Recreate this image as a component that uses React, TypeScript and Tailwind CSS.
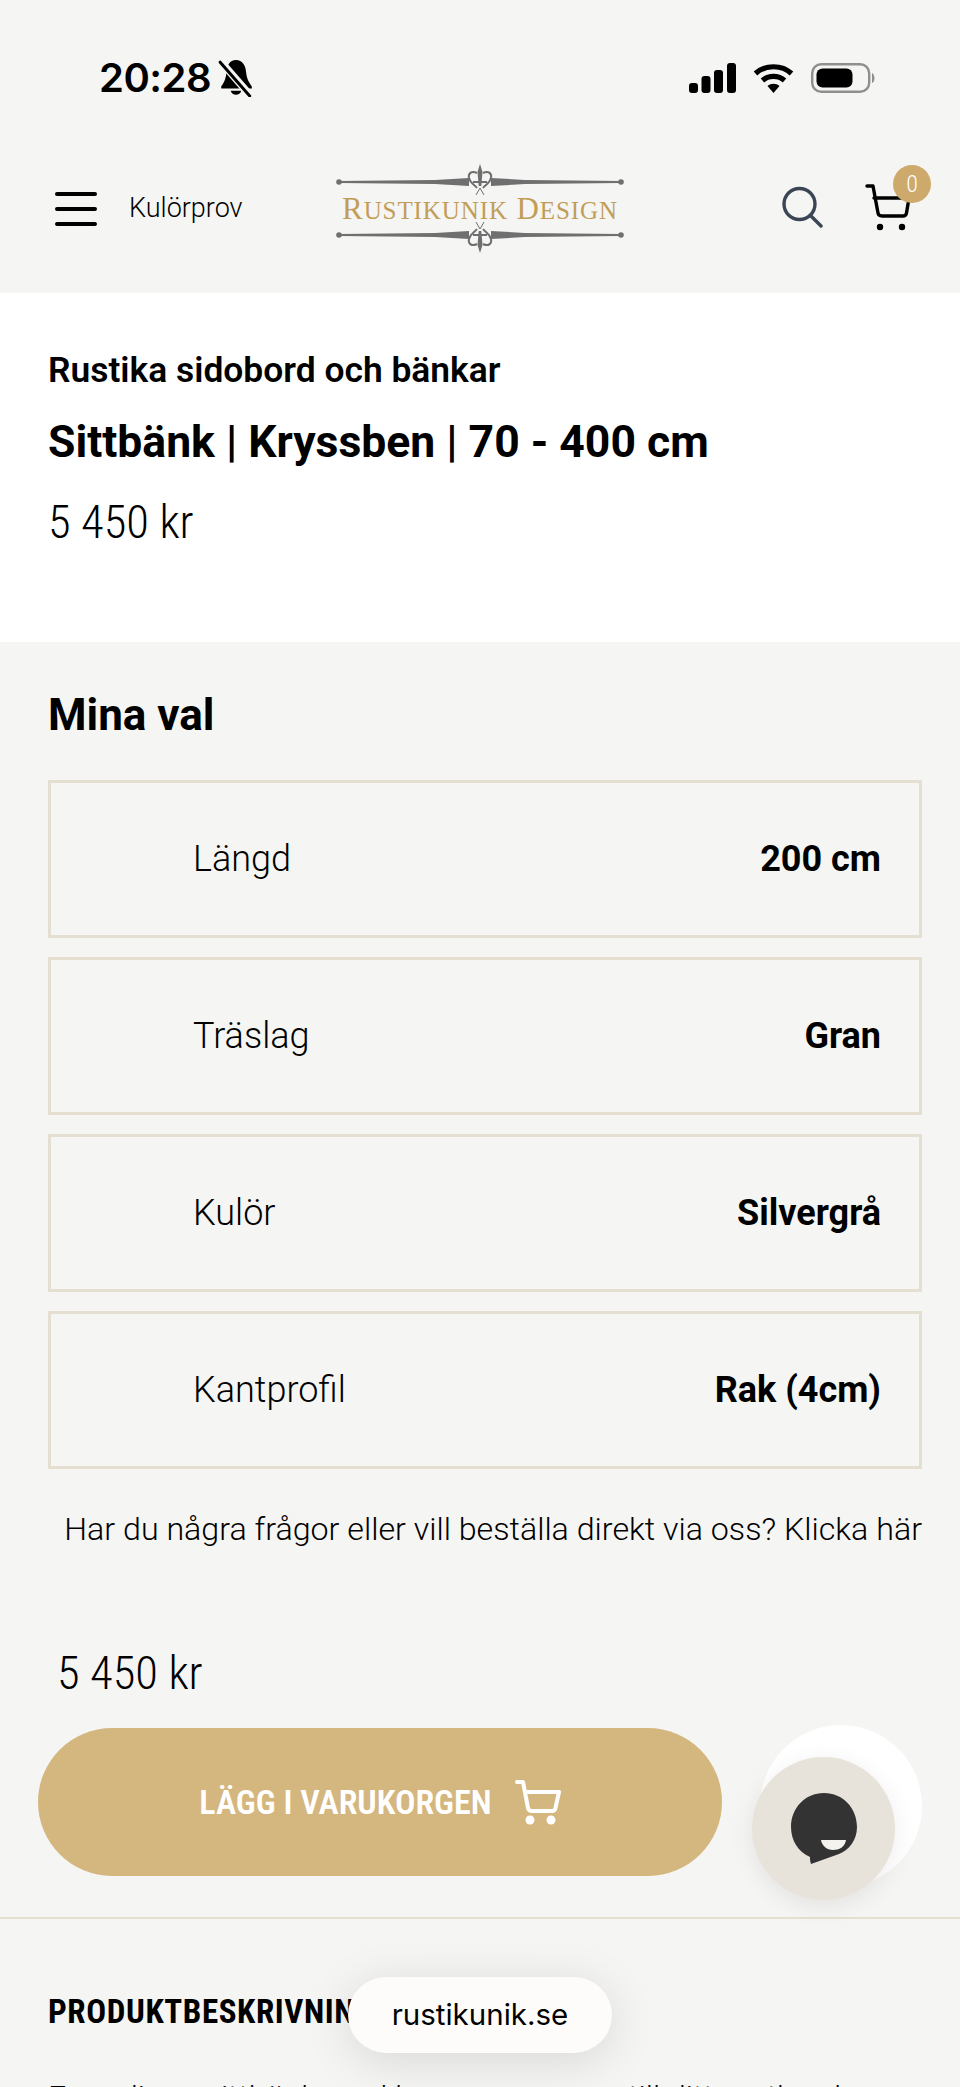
import React from 'react';

const din = "font-['Roboto',sans-serif]";

const options = [
  { label: 'Längd', value: '200 cm' },
  { label: 'Träslag', value: 'Gran' },
  { label: 'Kulör', value: 'Silvergrå' },
  { label: 'Kantprofil', value: 'Rak (4cm)' },
];

// Ornament bar used above and below the logo text
const LogoBar: React.FC<{ flip?: boolean }> = ({ flip }) => (
  <svg width="290" height="32" viewBox="0 0 290 32" className={flip ? 'block rotate-180' : 'block'}>
    <g fill="#6f6f6f">
      <circle cx="4" cy="18" r="2.8" />
      <circle cx="286" cy="18" r="2.8" />
      <path d="M4 17 L100 16 L134 14 L134 22 L100 20 L4 19 Z" />
      <path d="M286 17 L190 16 L156 14 L156 22 L190 20 L286 19 Z" />
      <path d="M145 0 L147.5 8 L146.3 22 L143.7 22 L142.5 8 Z" />
    </g>
    <g fill="none" stroke="#6f6f6f" strokeWidth="2">
      <path d="M142 9 C136 6 133 10 134 14 C135 19 139 20 142 24" />
      <path d="M148 9 C154 6 157 10 156 14 C155 19 151 20 148 24" />
      <path d="M138 18 L152 18" />
      <path d="M141 31 L145 24 L149 31" strokeWidth="1" />
    </g>
  </svg>
);

const StatusBar = () => (
  <div className="flex items-center justify-between h-[156px] pl-[99px] pr-[84px]">
    <div className="flex items-center gap-[7px]">
      <span className="font-['Inter',sans-serif] font-semibold text-[40px] leading-none text-black tracking-[-0.5px]">20:28</span>
      <svg width="36" height="38" viewBox="0 0 34 36">
        <path d="M17 1 C23 1 26 6 26.5 12 C27 18 29 22 32 26 L32 28 L3 28 L3 26 C6 22 7.5 18 8 12 C8.5 6 11 1 17 1 Z" fill="#000" />
        <path d="M12 30 C13 35 21 35 22 30 Z" fill="#000" />
        <path d="M3 3 L31 35" stroke="#f5f5f3" strokeWidth="7" />
        <path d="M2 3 L30 35" stroke="#000" strokeWidth="2.8" strokeLinecap="round" />
      </svg>
    </div>
    <div className="flex items-center gap-[17px]">
      <svg width="47" height="30" viewBox="0 0 47 30" fill="#000">
        <rect x="0" y="20" width="9" height="10" rx="3" />
        <rect x="12.5" y="13" width="9" height="17" rx="3" />
        <rect x="25" y="7" width="9" height="23" rx="3" />
        <rect x="38" y="0" width="9" height="30" rx="3" />
      </svg>
      <svg width="41" height="30" viewBox="0 0 41 30" fill="none">
        <path d="M2.5 10.5 C12 1.5 29 1.5 38.5 10.5" stroke="#000" strokeWidth="5.2" />
        <path d="M9.5 17.5 C15.5 12 25.5 12 31.5 17.5" stroke="#000" strokeWidth="5.2" />
        <path d="M14.5 23 C18 20 23 20 26.5 23 L20.5 30 Z" fill="#000" />
      </svg>
      <svg width="65" height="30" viewBox="0 0 65 30" fill="none">
        <rect x="1.2" y="1.2" width="57" height="27.6" rx="9" stroke="#8f8f8f" strokeWidth="2.4" />
        <rect x="5.5" y="5.5" width="36" height="19" rx="6" fill="#000" />
        <path d="M61 10 C64 11 64.5 19 61 20 Z" fill="#8f8f8f" />
      </svg>
    </div>
  </div>
);

const Header = () => (
  <div className="relative grid grid-cols-[1fr_auto_1fr] items-center h-[137px] pb-[32px] px-[55px]">
    <div className="flex items-center">
      <div className="flex flex-col gap-[11px] w-[42px] shrink-0">
        <div className="h-[4px] bg-black rounded-full" />
        <div className="h-[4px] bg-black rounded-full" />
        <div className="h-[4px] bg-black rounded-full" />
      </div>
      <span className={`${din} ml-[32px] font-light text-[27px] leading-none text-black`}>Kulörprov</span>
    </div>

    <div className="flex flex-col items-center">
      <LogoBar />
      <div className="font-['Liberation_Serif',serif] text-[#c29d58] leading-none whitespace-nowrap my-[-3px] tracking-[0.9px]">
        <span className="text-[31px]">R</span><span className="text-[25px]">USTIKUNIK</span>
        <span className="text-[31px]"> D</span><span className="text-[25px]">ESIGN</span>
      </div>
      <LogoBar flip />
    </div>
    <div />

    <svg width="42" height="42" viewBox="0 0 42 42" fill="none" className="absolute left-[782px] top-[30px]">
      <circle cx="17.5" cy="18" r="15.5" stroke="#3c4556" strokeWidth="3.4" />
      <path d="M28.5 29.5 L39 40" stroke="#3c4556" strokeWidth="3.4" strokeLinecap="round" />
    </svg>
    <svg width="46" height="48" viewBox="0 0 46 48" fill="none" className="absolute left-[865px] top-[27px]">
      <path d="M2 3 L8 3 L13 30 Q13.5 33 17 33 L38 33 Q41 33 41.5 30 L44 15 L9 15" stroke="#000" strokeWidth="3.4" strokeLinecap="round" strokeLinejoin="round" />
      <circle cx="15" cy="44" r="3.2" fill="#000" />
      <circle cx="37" cy="44" r="3.2" fill="#000" />
    </svg>
    <div className={`${din} absolute left-[893px] top-[9px] w-[38px] h-[38px] rounded-full bg-[#cdaa6c] flex items-center justify-center text-white font-light text-[24px] leading-none [font-stretch:85%]`}>
      0
    </div>
  </div>
);

export default function App() {
  return (
    <div className={`relative w-[960px] h-[2087px] overflow-hidden bg-[#f5f5f3] text-black ${din}`}>
      <StatusBar />
      <Header />

      <div className="bg-white h-[349px] px-[48px] pt-[57px]">
        <div className="font-semibold text-[35.4px] leading-[40px]">Rustika sidobord och bänkar</div>
        <div className="font-bold text-[44.5px] leading-[50px] mt-[27px]">Sittbänk | Kryssben | 70 - 400 cm</div>
        <div className="font-light text-[46.5px] leading-[50px] mt-[30px] [font-stretch:85%]">5 450 kr</div>
      </div>

      <div className="pl-[48px] pr-[38px] pt-[47px]">
        <div className="font-bold text-[44px] leading-[52px]">Mina val</div>
        <div className="flex flex-col gap-[19px] mt-[39px]">
          {options.map((o) => (
            <div key={o.label} className="flex items-center justify-between h-[158px] border-[3px] border-[#e5dfd2] pl-[142px] pr-[38px]">
              <span className="font-light text-[36px] leading-none">{o.label}</span>
              <span className="font-bold text-[36px] leading-none">{o.value}</span>
            </div>
          ))}
        </div>
        <div className="text-right text-[32.2px] font-light leading-[40px] mt-[40px] whitespace-nowrap">
          Har du några frågor eller vill beställa direkt via oss? Klicka här
        </div>
      </div>

      <div className="font-light text-[46.5px] leading-[50px] pl-[57px] mt-[99px] [font-stretch:85%]">5 450 kr</div>

      <div className="flex items-center justify-center gap-[23px] ml-[38px] mt-[30px] w-[684px] h-[148px] rounded-full bg-[#d4b67f] text-white">
        <span className="font-semibold text-[34px] leading-none [font-stretch:85%]">LÄGG I VARUKORGEN</span>
        <svg width="46" height="46" viewBox="0 0 46 46" fill="none">
          <path d="M2 3 L8 3 L13 29 Q13.5 32 17 32 L37 32 Q40 32 40.5 29 L44 13 L10 13" stroke="#fff" strokeWidth="4" strokeLinecap="round" strokeLinejoin="round" />
          <circle cx="15" cy="41" r="4.5" fill="#fff" />
          <circle cx="36" cy="41" r="4.5" fill="#fff" />
        </svg>
      </div>

      <div className="h-[2px] bg-[#e5dfd2] mt-[41px]" />

      <div className="px-[48px] pt-[74px]">
        <div className="font-bold text-[33px] leading-[38px] whitespace-nowrap tracking-[0.6px] [font-stretch:85%]">PRODUKTBESKRIVNING</div>
        <div className="font-light text-[32px] leading-[40px] mt-[46px] whitespace-nowrap">En rodigen sittbänk med ben som passar till ditt matbord</div>
      </div>

      {/* floating chat button */}
      <div className="absolute left-[760px] top-[1725px] w-[162px] h-[162px] rounded-full bg-white" />
      <div className="absolute left-[752px] top-[1757px] w-[143px] h-[143px] rounded-full bg-[#e8e3da] shadow-[0_6px_24px_rgba(0,0,0,0.08)] flex items-center justify-center">
        <svg width="70" height="74" viewBox="0 0 70 74">
          <path d="M35 1 C54 1 68 16 68 35 C68 48 60 58 50 62 L22 72 C21 69 21 67 21 65 C9 60 2 48 2 35 C2 16 16 1 35 1 Z" fill="#333" />
          <path d="M32 48 L57 48 C56 55 50 58 44 58 C38 58 33 54 32 48 Z" fill="#f5f3ee" />
        </svg>
      </div>

      {/* browser address pill */}
      <div className="absolute left-[348px] top-[1977px] w-[264px] h-[76px] rounded-[38px] bg-[#fdfcfb] shadow-[0_8px_48px_rgba(0,0,0,0.12)] flex items-center justify-center font-['Inter',sans-serif] text-[29.5px] leading-none">
        rustikunik.se
      </div>
    </div>
  );
}
